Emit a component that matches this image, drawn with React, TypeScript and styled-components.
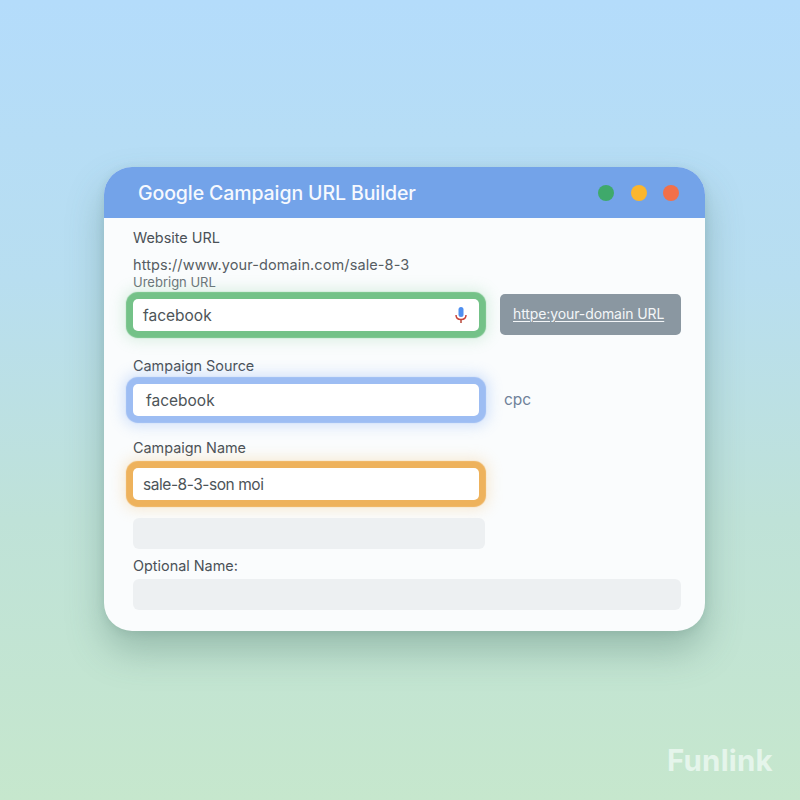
import React from "react";
import styled, { createGlobalStyle } from "styled-components";

const Global = createGlobalStyle`
  html, body { margin: 0; padding: 0; }
  body { font-family: Inter, "Noto Sans", "Liberation Sans", sans-serif; }
`;

const Page = styled.div`
  width: 800px;
  height: 800px;
  overflow: hidden;
  box-sizing: border-box;
  padding: 167px 95px 0 104px;
  display: flex;
  flex-direction: column;
  align-items: stretch;
  background: linear-gradient(180deg, #b4dcfb 0%, #b8def0 35%, #bfe2d8 65%, #c6e7cd 100%);
`;

const Card = styled.div`
  height: 464px;
  border-radius: 28px;
  background: #fafcfd;
  overflow: hidden;
  box-shadow: 0 20px 36px rgba(70, 110, 100, 0.34), 0 2px 8px rgba(70, 110, 100, 0.14);
  display: flex;
  flex-direction: column;
`;

const Header = styled.div`
  height: 51px;
  flex: none;
  box-sizing: border-box;
  padding: 0 26px 0 34px;
  background: #73a3e9;
  display: flex;
  align-items: center;
  justify-content: space-between;
`;

const Title = styled.div`
  font-size: 19.5px;
  font-weight: 500;
  color: #f6f9fe;
  letter-spacing: -0.1px;
`;

const Dots = styled.div`
  display: flex;
  gap: 16.5px;
`;

const Dot = styled.span<{ $c: string }>`
  width: 16px;
  height: 16px;
  border-radius: 50%;
  background: ${(p) => p.$c};
`;

const Body = styled.div`
  flex: 1;
  padding: 11px 24px 0 29px;
  display: flex;
  flex-direction: column;
`;

const Label = styled.div<{ $top?: number; $bottom?: number }>`
  font-size: 14.4px;
  line-height: 18px;
  color: #4a5157;
  margin-top: ${(p) => p.$top ?? 0}px;
  margin-bottom: ${(p) => p.$bottom ?? 0}px;
`;

const UrlText = styled.div`
  font-size: 14.5px;
  line-height: 18px;
  letter-spacing: 0.1px;
  color: #565d63;
  margin-top: 9px;
`;

const SubText = styled.div`
  font-size: 13px;
  line-height: 16px;
  color: #6c7479;
  margin-bottom: 2px;
`;

const Row = styled.div`
  display: flex;
  align-items: center;
`;

const FieldRing = styled.div<{ $c: string; $glow: string; $gap: number }>`
  width: 346px;
  height: 32px;
  flex: none;
  box-sizing: border-box;
  border-radius: 5px;
  background: #fff;
  display: flex;
  align-items: center;
  justify-content: space-between;
  box-shadow: 0 0 1px 7px ${(p) => p.$c}, 0 0 14px 10px ${(p) => p.$glow};
  margin-top: ${(p) => p.$gap}px;
  margin-bottom: 7px;
`;

const FieldText = styled.span<{ $left: number; $track?: number }>`
  font-size: 15.5px;
  color: #4d5458;
  padding-left: ${(p) => p.$left}px;
  letter-spacing: ${(p) => p.$track ?? 0}px;
`;

const Mic = styled.svg`
  width: 14px;
  height: 18px;
  margin-right: 11px;
`;

const LinkButton = styled.div`
  width: 181px;
  height: 41px;
  margin-left: 21px;
  margin-top: -1px;
  box-sizing: border-box;
  padding: 0 0 3px 13px;
  border-radius: 5px;
  background: #8a97a1;
  display: flex;
  align-items: center;
`;

const LinkText = styled.span`
  font-size: 14px;
  color: #f3f6f8;
  text-decoration: underline;
  text-underline-offset: 2px;
  text-decoration-thickness: 1px;
  letter-spacing: -0.1px;
`;

const SideText = styled.span`
  font-size: 15.5px;
  color: #6f8199;
  margin-left: 25px;
`;

const Placeholder = styled.div<{ $w: number; $top: number }>`
  width: ${(p) => p.$w}px;
  height: 31px;
  flex: none;
  margin-top: ${(p) => p.$top}px;
  border-radius: 6px;
  background: #edf0f2;
`;

const Brand = styled.div`
  position: absolute;
  left: 667px;
  top: 740px;
  font-size: 29.5px;
  line-height: 40px;
  font-weight: 700;
  letter-spacing: 0.2px;
  color: rgba(240, 250, 245, 0.75);
`;

export default function App() {
  return (
    <Page>
      <Global />
      <Card>
        <Header>
          <Title>Google Campaign URL Builder</Title>
          <Dots>
            <Dot $c="#3fa96b" />
            <Dot $c="#fbb62d" />
            <Dot $c="#f2704a" />
          </Dots>
        </Header>
        <Body>
          <Label>Website URL</Label>
          <UrlText>https://www.your-domain.com/sale-8-3</UrlText>
          <SubText>Urebrign URL</SubText>
          <Row>
            <FieldRing $gap={7} $c="#74c288" $glow="rgba(120, 200, 140, 0.22)">
              <FieldText $left={10}>facebook</FieldText>
              <Mic viewBox="0 0 14 18">
                <rect x="4.500" y="1" width="5" height="10" rx="2.500" fill="#4f8ff0" />
                <path d="M2 9c0 3 2.200 4.500 5 4.500s5-1.500 5-4.500" fill="none" stroke="#c8443a" strokeWidth="1.500" />
                <path d="M7 13.500V17" stroke="#b9473a" strokeWidth="1.500" />
              </Mic>
            </FieldRing>
            <LinkButton>
              <LinkText>httpe:your-domain URL</LinkText>
            </LinkButton>
          </Row>
          <Label $top={19}>Campaign Source</Label>
          <Row>
            <FieldRing $gap={9} $c="#9dbdf3" $glow="rgba(120, 165, 245, 0.3)">
              <FieldText $left={13}>facebook</FieldText>
            </FieldRing>
            <SideText>cpc</SideText>
          </Row>
          <Label $top={16}>Campaign Name</Label>
          <Row>
            <FieldRing $gap={11} $c="#eeb25c" $glow="rgba(245, 190, 110, 0.28)">
              <FieldText $left={10} $track={-0.45}>sale-8-3-son moi</FieldText>
            </FieldRing>
          </Row>
          <Placeholder $w={352} $top={11} />
          <Label $top={8} $bottom={4}>Optional Name:</Label>
          <Placeholder $w={548} $top={0} />
        </Body>
      </Card>
      <Brand>Funlink</Brand>
    </Page>
  );
}
